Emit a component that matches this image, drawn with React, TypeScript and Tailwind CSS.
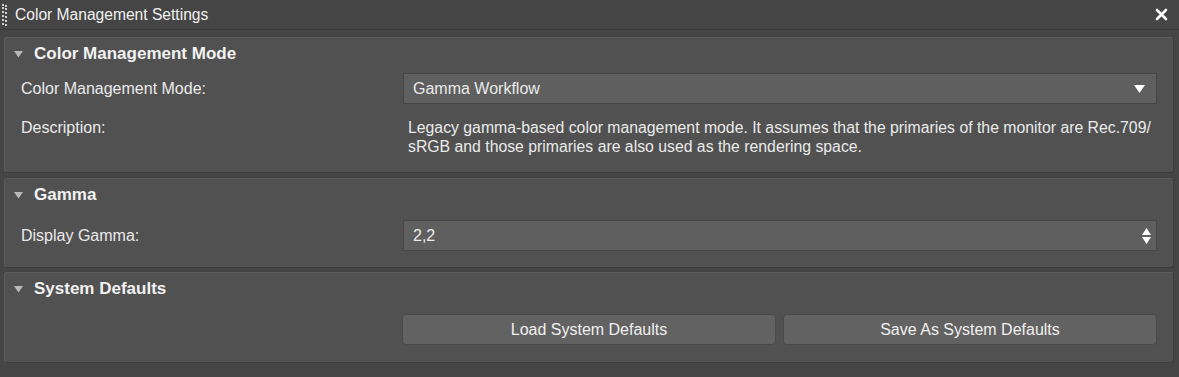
import React from "react";

const font = { fontFamily: '"Liberation Sans", Arial, sans-serif' };

const Caret = () => (
  <svg width="9" height="7" viewBox="0 0 9 7" className="shrink-0">
    <path d="M0 0 H9 L4.5 6.5 Z" fill="#b9b9b9" />
  </svg>
);

const Panel: React.FC<{ title: string; className?: string; children: React.ReactNode }> = ({
  title,
  className,
  children,
}) => (
  <div className={"rounded-[3px] bg-[#515151] border border-[#3d3d3d] border-t-[#5a5a5a] border-l-[#5a5a5a] " + (className ?? "")}>
    <div className="h-[30px] flex items-center pt-[2px] pl-[9px] gap-[11px]">
      <Caret />
      <span className="text-[17px] font-bold text-[#f2f2f2]">{title}</span>
    </div>
    {children}
  </div>
);

const Row: React.FC<{ label: string; children: React.ReactNode }> = ({ label, children }) => (
  <div className="flex items-center">
    <div className="w-[398px] pl-[16px] pt-[1px] shrink-0">{label}</div>
    <div className="flex-1 pr-[16px]">{children}</div>
  </div>
);

export default function App() {
  return (
    <div className="w-[1179px] h-[377px] bg-[#454545] text-[#eaeaea] text-[16px] overflow-hidden flex flex-col" style={font}>
      <div className="h-[30px] shrink-0 flex items-center border-b border-[#393939] relative">
        <div className="absolute left-[2px] top-[4px] h-[21px] w-[5px] flex gap-[1px]">
          <div className="w-[2px] h-full border-l-2 border-dotted border-[#d0d0d0]" />
          <div className="w-[2px] h-full border-l-2 border-dotted border-[#d0d0d0] mt-[1px]" />
        </div>
        <span className="pl-[15px] text-[15.6px] text-[#f0f0f0]">Color Management Settings</span>
        <svg className="ml-auto mr-[11px]" width="13" height="13" viewBox="0 0 13 13">
          <path d="M2 2 L11 11 M11 2 L2 11" stroke="#ffffff" strokeWidth="2.6" strokeLinecap="round" />
        </svg>
      </div>

      <div className="flex flex-col pl-[4px] pr-[5px] pt-[7px]">
        <Panel title="Color Management Mode" className="h-[136px]">
          <div className="mt-[5px]">
            <Row label="Color Management Mode:">
              <div className="h-[31px] bg-[#5f5f5f] border border-[#474747] flex items-center pl-[9px] pr-[11px]">
                <span>Gamma Workflow</span>
                <svg className="ml-auto" width="11" height="8" viewBox="0 0 11 8">
                  <path d="M0 0 H11 L5.5 8 Z" fill="#ffffff" />
                </svg>
              </div>
            </Row>
          </div>
          <div className="flex mt-[14px] leading-[19px]">
            <div className="w-[398px] pl-[16px] shrink-0">Description:</div>
            <div className="pl-[5px] text-[15.8px]">
              Legacy gamma-based color management mode. It assumes that the primaries of the monitor are Rec.709/
              <br />
              sRGB and those primaries are also used as the rendering space.
            </div>
          </div>
        </Panel>

        <Panel title="Gamma" className="h-[90px] mt-[5px]">
          <div className="mt-[11px]">
            <Row label="Display Gamma:">
              <div className="h-[31px] bg-[#5f5f5f] border border-[#474747] flex items-center pl-[9px] pr-[5px]">
                <span>2,2</span>
                <svg className="ml-auto" width="9" height="16" viewBox="0 0 9 16">
                  <path d="M0 7 H9 L4.5 0 Z" fill="#ffffff" />
                  <path d="M0 9 H9 L4.5 16 Z" fill="#ffffff" />
                </svg>
              </div>
            </Row>
          </div>
        </Panel>

        <Panel title="System Defaults" className="h-[91px] mt-[4px]">
          <div className="mt-[11px] flex gap-[7px] pl-[397px] pr-[16px]">
            <button className="flex-1 h-[31px] rounded-[4px] bg-[#626262] border border-[#4a4a4a] text-[#f0f0f0]">
              Load System Defaults
            </button>
            <button className="flex-1 h-[31px] rounded-[4px] bg-[#626262] border border-[#4a4a4a] text-[#f0f0f0]">
              Save As System Defaults
            </button>
          </div>
        </Panel>
      </div>
    </div>
  );
}
